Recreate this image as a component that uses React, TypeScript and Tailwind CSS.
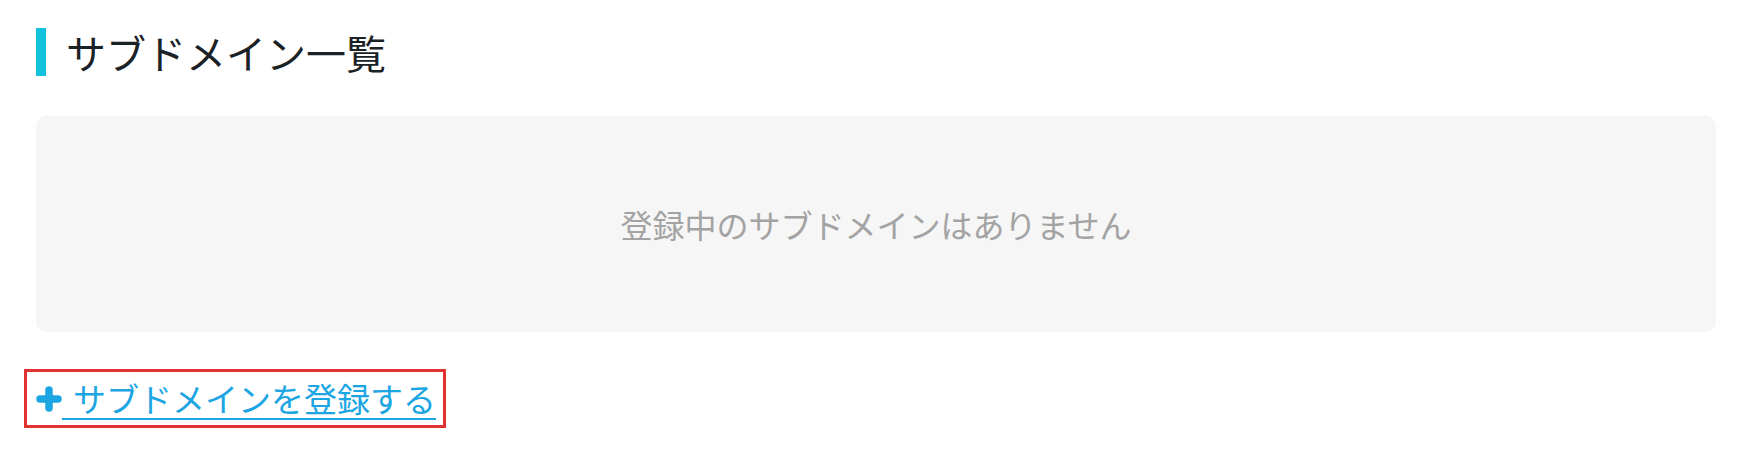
const jp = "font-['Noto_Sans_CJK_JP','Noto_Sans',sans-serif]";

function PlusIcon() {
  return (
    <svg width="26" height="26" viewBox="0 0 26 26" className="shrink-0">
      <path d="M13 4v18M4 13h18" stroke="#1ba5e2" strokeWidth="7.5" strokeLinecap="round" fill="none" />
    </svg>
  );
}

function SectionTitle({ title }: { title: string }) {
  return (
    <div className="flex items-center h-12">
      <span className="w-[10px] h-12 bg-[#13c2dd]" />
      <h2 className={`ml-[20px] text-[40px] leading-none text-[#1a2226] ${jp}`}>{title}</h2>
    </div>
  );
}

function EmptyState({ text }: { text: string }) {
  return (
    <div className="mt-10 h-[216px] rounded-[10px] bg-[#f6f6f6] flex items-center justify-center">
      <p className={`text-[32px] text-[#a3a3a3] ${jp}`}>{text}</p>
    </div>
  );
}

export default function App() {
  return (
    <div className="w-[1754px] h-[456px] bg-white pt-7 pl-9 pr-[38px]">
      <SectionTitle title="サブドメイン一覧" />
      <EmptyState text="登録中のサブドメインはありません" />
      <div className="mt-[37px] -ml-3">
        <a
          href="#"
          className={`inline-flex items-center h-[59px] pl-[9px] pr-[7px] border-[3px] border-[#e23131] text-[#1ba5e2] ${jp}`}
        >
          <PlusIcon />
          <span className="text-[33px] leading-none underline decoration-2 underline-offset-[6px] whitespace-pre">
            {"\u2004サブドメインを登録する"}
          </span>
        </a>
      </div>
    </div>
  );
}
